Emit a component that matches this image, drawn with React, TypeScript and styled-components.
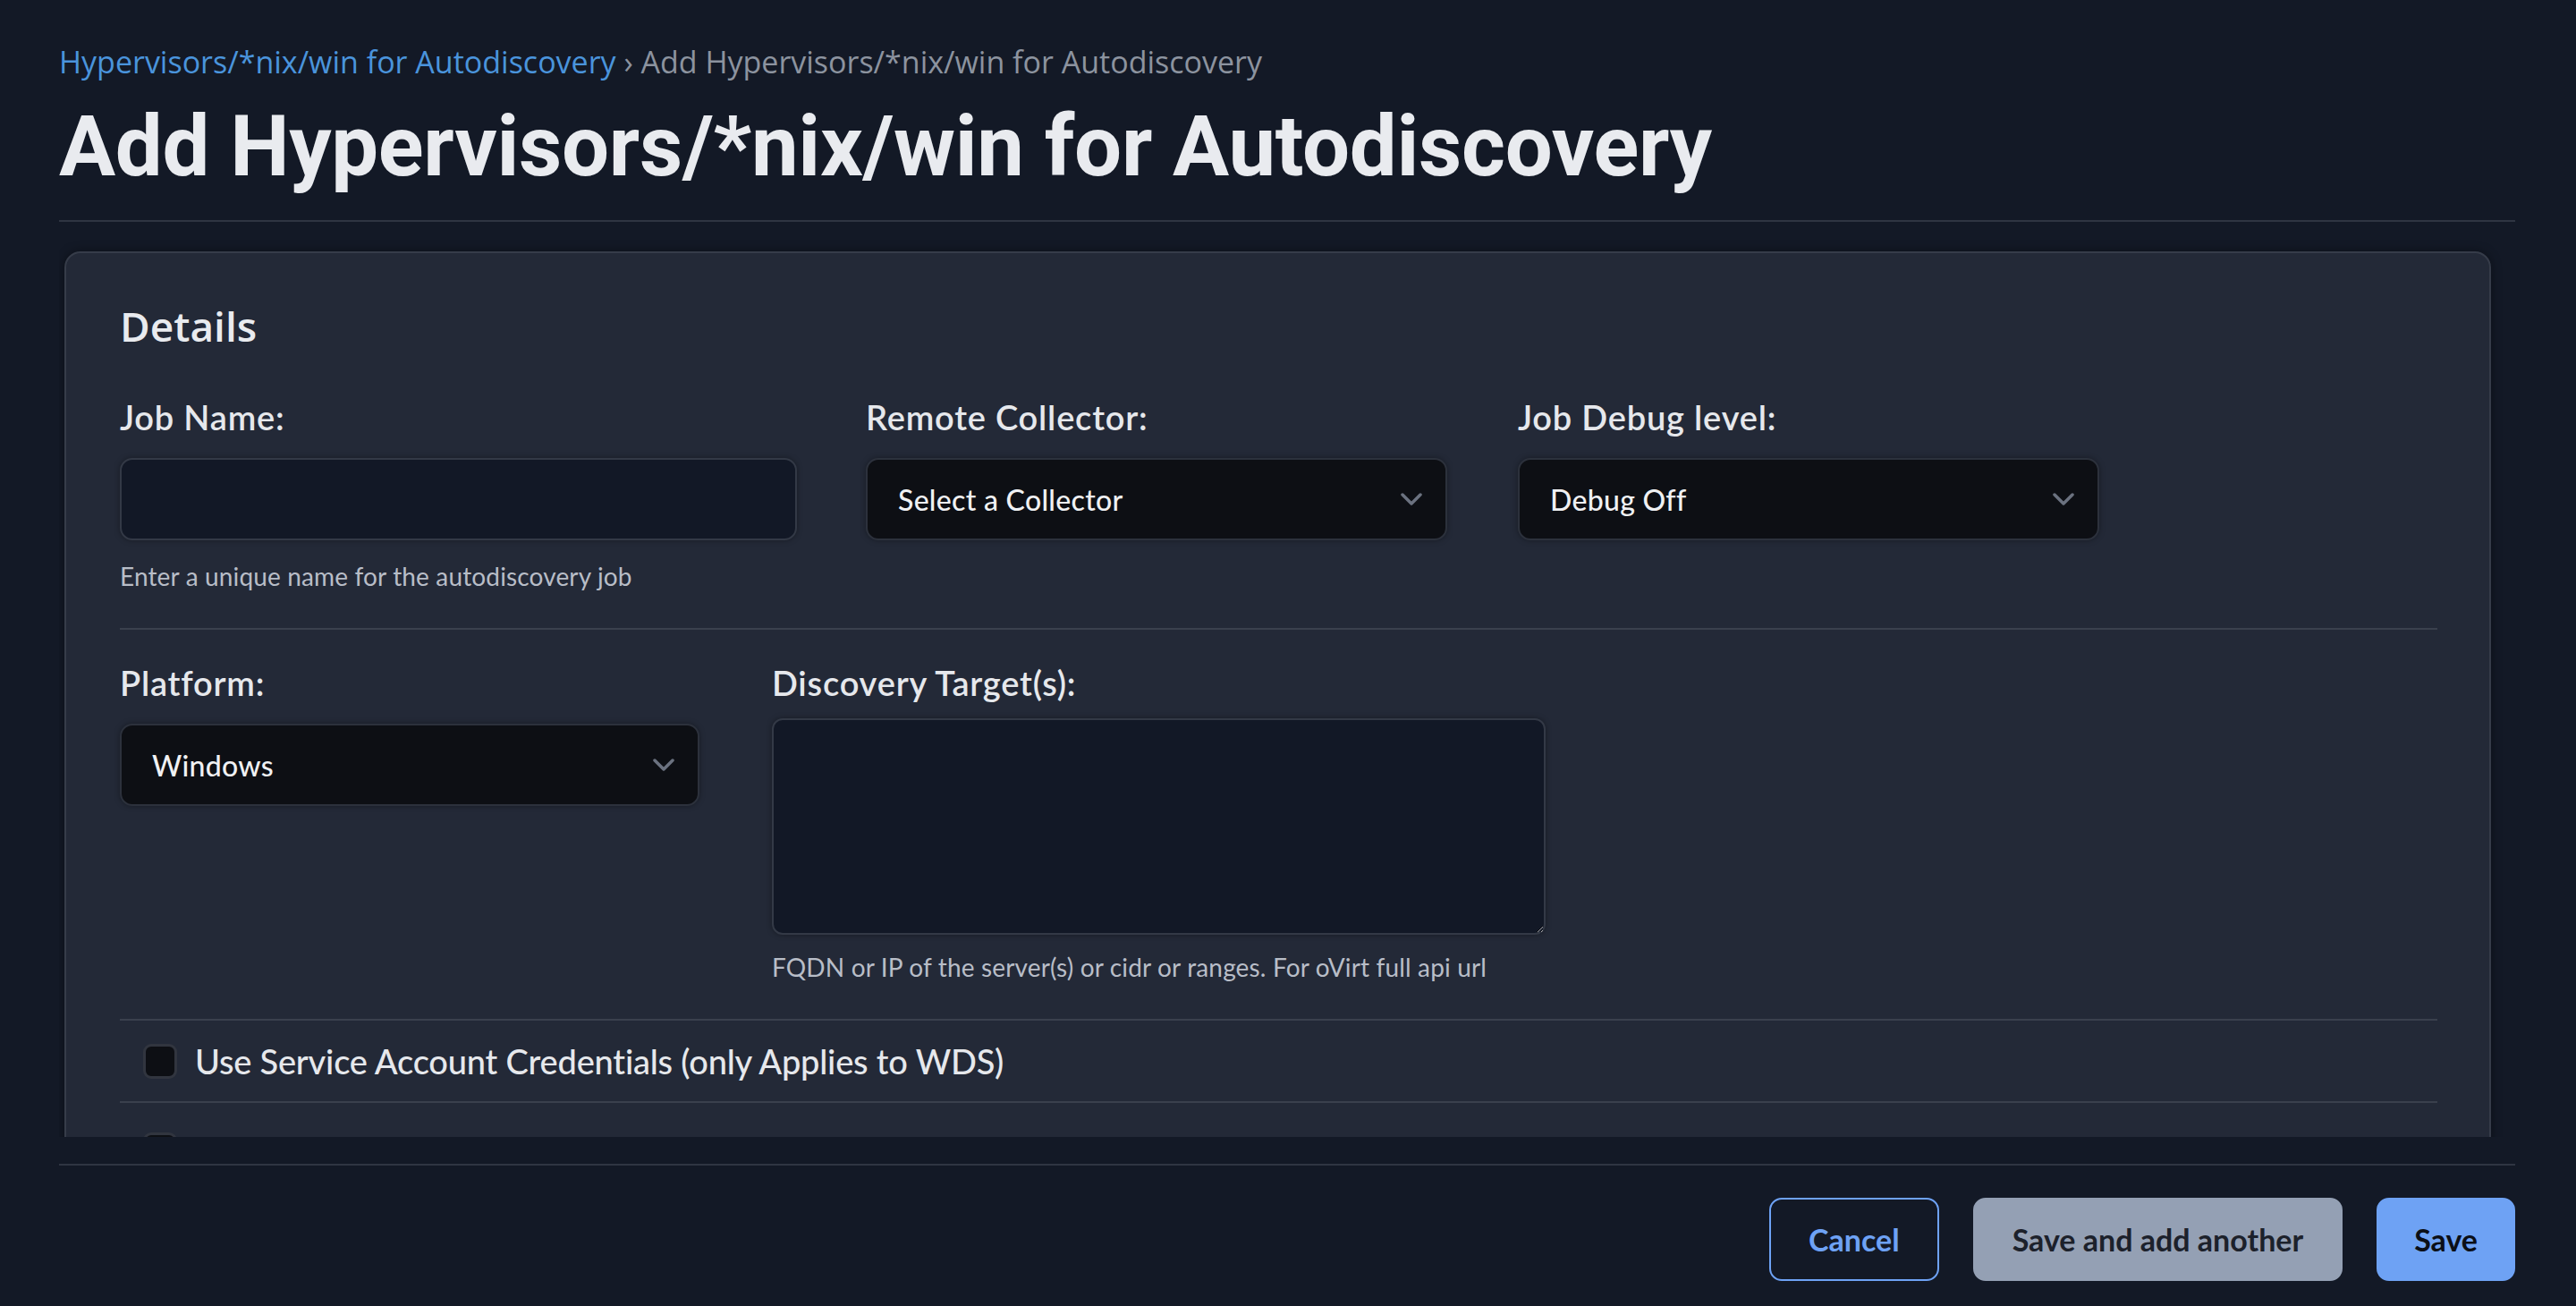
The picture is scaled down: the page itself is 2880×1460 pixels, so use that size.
import React from 'react';
import styled, { createGlobalStyle } from 'styled-components';

const GlobalStyle = createGlobalStyle`
  html, body {
    margin: 0;
    padding: 0;
    background: #131926;
  }
  body {
    font-family: Lato, "Noto Sans", sans-serif;
    color: #e5e7eb;
  }
  * { box-sizing: border-box; }
`

const Page = styled.div`
  height: 100vh;
  display: flex;
  flex-direction: column;
  padding: 0 68px 0 66px;
  overflow: hidden;
`

const Header = styled.header`
  padding-top: 49px;
  padding-bottom: 25px;
  border-bottom: 2px solid #2f3542;
`

const Crumbs = styled.nav`
  font-family: "Open Sans", sans-serif;
  font-size: 34px;
  line-height: 40px;
  color: #8c939f;
  white-space: nowrap;
`

const CrumbLink = styled.a`
  color: #4a94dc;
  text-decoration: none;
`

const Title = styled.h1`
  margin: 19px 0 0;
  font-family: Roboto, sans-serif;
  font-weight: 700;
  font-size: 94px;
  line-height: 113px;
  letter-spacing: -0.3px;
  color: #e9ebef;
  white-space: nowrap;
`

const Body = styled.main`
  flex: 1;
  min-height: 0;
  overflow: hidden;
`

const Card = styled.section`
  margin: 33px 27px 0 6px;
  background: #232937;
  border: 2px solid #363c49;
  border-radius: 18px;
  box-shadow: 0 0 12px rgba(0, 0, 0, 0.4);
  padding: 53px 58px 40px 60px;
`

const CardTitle = styled.h2`
  margin: 0;
  font-family: "Open Sans", sans-serif;
  font-weight: 600;
  font-size: 46px;
  line-height: 56px;
  color: #e9ebef;
`

const Row = styled.div<{ $top: number }>`
  display: flex;
  align-items: flex-start;
  padding: ${p => p.$top}px 0 40px;
  border-bottom: 2px solid #3a404d;
`

const Field = styled.div<{ $width: number; $gap?: number }>`
  width: ${p => p.$width}px;
  margin-right: ${p => p.$gap ?? 0}px;
  display: flex;
  flex-direction: column;
`

const Label = styled.label`
  font-weight: 600;
  font-size: 38px;
  line-height: 44px;
  letter-spacing: 0.8px;
  color: #e6e8ec;
  white-space: nowrap;
`

const TextInput = styled.input`
  margin-top: 24px;
  height: 92px;
  width: 100%;
  background: #121826;
  border: 2px solid #333946;
  border-radius: 14px;
  box-shadow: 0 0 6px rgba(0, 0, 0, 0.35);
  outline: none;
  color: #f0f1f3;
  font: inherit;
  font-size: 32px;
  padding: 0 32px;
`

const SelectBox = styled.div`
  margin-top: 24px;
  height: 92px;
  display: flex;
  align-items: center;
  justify-content: space-between;
  padding: 0 26px 0 34px;
  background: #0d0f14;
  border: 2px solid #2c313c;
  border-radius: 14px;
  box-shadow: 0 0 6px rgba(0, 0, 0, 0.35);
  font-weight: 500;
  font-size: 32px;
  letter-spacing: 0.3px;
  color: #f0f1f3;
  white-space: nowrap;
`

const TextArea = styled.textarea`
  margin-top: 18px;
  height: 242px;
  width: 100%;
  background: #121826;
  border: 2px solid #333946;
  border-radius: 12px;
  box-shadow: 0 0 6px rgba(0, 0, 0, 0.35);
  outline: none;
  color-scheme: dark;
  color: #f0f1f3;
  font: inherit;
  font-size: 32px;
  padding: 16px 24px;
`

const Help = styled.div<{ $top: number }>`
  margin-top: ${p => p.$top}px;
  font-size: 28px;
  line-height: 36px;
  letter-spacing: 0.15px;
  color: #b8bdc7;
  white-space: nowrap;
`

const CheckRow = styled.div<{ $top: number; $bottom: number }>`
  display: flex;
  align-items: center;
  gap: 20px;
  padding: ${p => p.$top}px 0 ${p => p.$bottom}px 26px;
  border-bottom: 2px solid #3a404d;
`

const CheckLabel = styled.label`
  font-weight: 500;
  font-size: 38px;
  line-height: 48px;
  letter-spacing: -0.2px;
  color: #e6e8ec;
  white-space: nowrap;
`

const Box = styled.span`
  width: 38px;
  height: 39px;
  flex: none;
  background: #0d0f14;
  border: 3px solid #31353f;
  border-radius: 9px;
`

const Footer = styled.footer`
  margin-top: 30px;
  border-top: 2px solid #2f3542;
  padding: 36px 0 28px;
  display: flex;
  justify-content: flex-end;
  gap: 38px;
`

const Button = styled.button<{ $kind: 'outline' | 'muted' | 'primary' }>`
  height: 93px;
  padding: 0 ${p => p.$kind === 'primary' ? 40 : 42}px;
  border-radius: 14px;
  font-family: Lato, sans-serif;
  font-weight: 700;
  font-size: 34px;
  border: 2px solid ${p => p.$kind === 'outline' ? '#6ea2f5' : p.$kind === 'muted' ? '#94a0b4' : '#6ea2f4'};
  background: ${p => p.$kind === 'outline' ? 'transparent' : p.$kind === 'muted' ? '#94a0b4' : '#6ea2f4'};
  color: ${p => p.$kind === 'outline' ? '#6ea2f5' : p.$kind === 'muted' ? '#1c212b' : '#0b0f17'};
  cursor: pointer;
`

const Chevron = () => (
  <svg width="24" height="14" viewBox="0 0 24 14" fill="none">
    <path d="M2 2l10 10L22 2" stroke="#6b7280" strokeWidth="3.5" strokeLinecap="round" strokeLinejoin="round" />
  </svg>
)

const Select = ({ value }: { value: string }) => (
  <SelectBox role="button">
    <span>{value}</span>
    <Chevron />
  </SelectBox>
)

export default function App() {
  return (
    <>
      <GlobalStyle />
      <Page>
        <Header>
          <Crumbs>
            <CrumbLink href="#">Hypervisors/*nix/win for Autodiscovery</CrumbLink> › Add Hypervisors/*nix/win for Autodiscovery
          </Crumbs>
          <Title>Add Hypervisors/*nix/win for Autodiscovery</Title>
        </Header>
        <Body>
          <Card>
            <CardTitle>Details</CardTitle>
            <Row $top={52}>
              <Field $width={757} $gap={77}>
                <Label>Job Name:</Label>
                <TextInput />
                <Help $top={22}>Enter a unique name for the autodiscovery job</Help>
              </Field>
              <Field $width={650} $gap={79}>
                <Label>Remote Collector:</Label>
                <Select value="Select a Collector" />
              </Field>
              <Field $width={650}>
                <Label>Job Debug level:</Label>
                <Select value="Debug Off" />
              </Field>
            </Row>
            <Row $top={37}>
              <Field $width={648} $gap={81}>
                <Label>Platform:</Label>
                <Select value="Windows" />
              </Field>
              <Field $width={865}>
                <Label>Discovery Target(s):</Label>
                <TextArea />
                <Help $top={18}>FQDN or IP of the server(s) or cidr or ranges. For oVirt full api url</Help>
              </Field>
            </Row>
            <CheckRow $top={21} $bottom={21}>
              <Box />
              <CheckLabel>Use Service Account Credentials (only Applies to WDS)</CheckLabel>
            </CheckRow>
            <CheckRow $top={33} $bottom={33}>
              <Box aria-label="Use SSH key" />
            </CheckRow>
          </Card>
        </Body>
        <Footer>
          <Button $kind="outline">Cancel</Button>
          <Button $kind="muted">Save and add another</Button>
          <Button $kind="primary">Save</Button>
        </Footer>
      </Page>
    </>
  )
}
